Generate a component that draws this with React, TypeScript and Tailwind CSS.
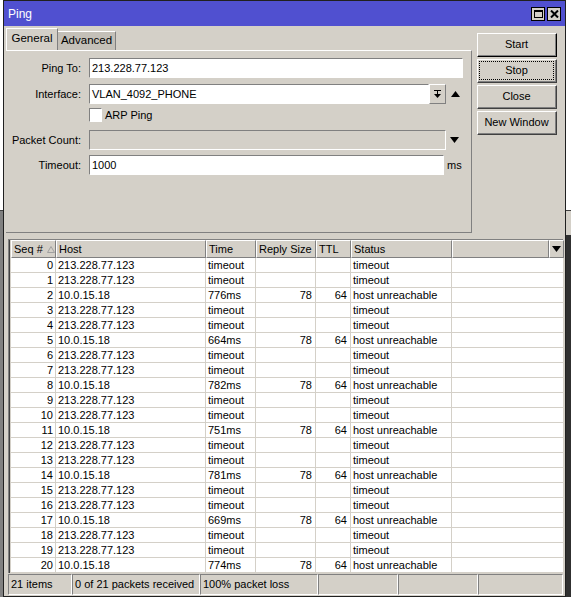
import React from "react";

const rows = [
  { seq: 0, host: "213.228.77.123", time: "timeout", size: "", ttl: "", status: "timeout" },
  { seq: 1, host: "213.228.77.123", time: "timeout", size: "", ttl: "", status: "timeout" },
  { seq: 2, host: "10.0.15.18", time: "776ms", size: "78", ttl: "64", status: "host unreachable" },
  { seq: 3, host: "213.228.77.123", time: "timeout", size: "", ttl: "", status: "timeout" },
  { seq: 4, host: "213.228.77.123", time: "timeout", size: "", ttl: "", status: "timeout" },
  { seq: 5, host: "10.0.15.18", time: "664ms", size: "78", ttl: "64", status: "host unreachable" },
  { seq: 6, host: "213.228.77.123", time: "timeout", size: "", ttl: "", status: "timeout" },
  { seq: 7, host: "213.228.77.123", time: "timeout", size: "", ttl: "", status: "timeout" },
  { seq: 8, host: "10.0.15.18", time: "782ms", size: "78", ttl: "64", status: "host unreachable" },
  { seq: 9, host: "213.228.77.123", time: "timeout", size: "", ttl: "", status: "timeout" },
  { seq: 10, host: "213.228.77.123", time: "timeout", size: "", ttl: "", status: "timeout" },
  { seq: 11, host: "10.0.15.18", time: "751ms", size: "78", ttl: "64", status: "host unreachable" },
  { seq: 12, host: "213.228.77.123", time: "timeout", size: "", ttl: "", status: "timeout" },
  { seq: 13, host: "213.228.77.123", time: "timeout", size: "", ttl: "", status: "timeout" },
  { seq: 14, host: "10.0.15.18", time: "781ms", size: "78", ttl: "64", status: "host unreachable" },
  { seq: 15, host: "213.228.77.123", time: "timeout", size: "", ttl: "", status: "timeout" },
  { seq: 16, host: "213.228.77.123", time: "timeout", size: "", ttl: "", status: "timeout" },
  { seq: 17, host: "10.0.15.18", time: "669ms", size: "78", ttl: "64", status: "host unreachable" },
  { seq: 18, host: "213.228.77.123", time: "timeout", size: "", ttl: "", status: "timeout" },
  { seq: 19, host: "213.228.77.123", time: "timeout", size: "", ttl: "", status: "timeout" },
  { seq: 20, host: "10.0.15.18", time: "774ms", size: "78", ttl: "64", status: "host unreachable" },
];

const cols = "grid grid-cols-[45px_150px_50px_60px_35px_101px_97px_15px]";

function Btn({ label, focus, def }: { label: string; focus?: boolean; def?: boolean }) {
  return (
    <div className={`h-[24px] w-[80px] ${def ? "border border-black" : "border border-[#404040]"} border-t-white border-l-white bg-[#d4d0c8]`}>
      <div className="flex h-full w-full border-r border-b border-[#808080] p-[1px]">
        <div className={`flex flex-1 items-center justify-center ${focus ? "border border-dotted border-black" : ""}`}>
          {label}
        </div>
      </div>
    </div>
  );
}

function Field({ className = "", children }: { className?: string; children?: React.ReactNode }) {
  return (
    <div className={`flex h-[20px] items-center border border-[#808080] border-r-white border-b-white pl-[2px] ${className}`}>
      {children}
    </div>
  );
}

export default function App() {
  return (
    <div className="flex h-[597px] w-[571px] overflow-hidden bg-white font-['Liberation_Sans',Arial,sans-serif] text-[11px] leading-none text-black">
      {/* outside strip left */}
      <div className="flex w-[3px] flex-col">
        <div className="h-[210px] bg-white" />
        <div className="flex-1 border-t border-[#404040] bg-[#808080]" />
      </div>

      {/* window */}
      <div className="flex w-[563px] flex-col border border-[#202020] bg-[#d4d0c8]">
        {/* title bar */}
        <div className="flex h-[25px] shrink-0 items-center bg-[#5050d0] pl-[4px] pr-[4px]">
          <span className="text-[12px] text-white">Ping</span>
          <div className="ml-auto flex gap-[2px]">
            <div className="flex h-[14px] w-[14px] items-center justify-center border border-black bg-[#d4d0c8]">
              <div className="h-[8px] w-[9px] border border-black border-t-2" />
            </div>
            <div className="flex h-[14px] w-[14px] items-center justify-center border border-black bg-[#d4d0c8]">
              <svg width="9" height="8" viewBox="0 0 9 8">
                <path d="M1 0.5 L8 7.5 M8 0.5 L1 7.5" stroke="black" strokeWidth="2" />
              </svg>
            </div>
          </div>
        </div>

        {/* top section */}
        <div className="flex shrink-0 pl-[2px] pt-[3px]">
          <div className="flex w-[466px] flex-col">
            {/* tabs */}
            <div className="flex h-[21px] items-end">
              <div className="relative z-10 flex h-[22px] w-[52px] items-center justify-center border-t border-l border-white border-r border-r-[#808080] bg-[#d4d0c8] pb-[2px] text-[11.5px]">
                General
              </div>
              <div className="flex h-[19px] w-[58px] items-center justify-center border-t border-r border-white border-r-[#808080] bg-[#c4c0b8] text-[11.5px]">
                Advanced
              </div>
            </div>
            {/* panel */}
            <div className="h-[183px] border-t border-white border-r border-r-[#808080] border-b border-b-[#808080] pt-[7px]">
              <div className="flex items-center">
                <div className="w-[76px] pr-[1px] text-right">Ping To:</div>
                <Field className="ml-[7px] w-[374px] bg-white">213.228.77.123</Field>
              </div>
              <div className="mt-[6px] flex items-center">
                <div className="w-[76px] pr-[1px] text-right">Interface:</div>
                <Field className="ml-[7px] w-[340px] bg-white">VLAN_4092_PHONE</Field>
                <div className="flex h-[20px] w-[17px] items-center justify-center border border-white border-r-[#808080] border-b-[#808080]">
                  <svg width="9" height="9" viewBox="0 0 9 9">
                    <path d="M1 0.5 H8" stroke="black" />
                    <path d="M4 1 H5 V4 H8 L4.5 8 L1 4 H4 Z" fill="black" />
                  </svg>
                </div>
                <svg className="ml-[5px]" width="9" height="6" viewBox="0 0 9 6">
                  <path d="M4.5 0 L9 6 H0 Z" fill="black" />
                </svg>
              </div>
              <div className="mt-[4px] flex items-center">
                <div className="ml-[83px] h-[14px] w-[13px] border border-[#808080] border-r-white border-b-white bg-white" />
                <span className="ml-[3px]">ARP Ping</span>
              </div>
              <div className="mt-[8px] flex items-center">
                <div className="w-[76px] pr-[1px] text-right">Packet Count:</div>
                <Field className="ml-[7px] w-[357px] bg-[#d4d0c8]" />
                <svg className="ml-[4px]" width="9" height="6" viewBox="0 0 9 6">
                  <path d="M0 0 H9 L4.5 6 Z" fill="black" />
                </svg>
              </div>
              <div className="mt-[5px] flex items-center">
                <div className="w-[76px] pr-[1px] text-right">Timeout:</div>
                <Field className="ml-[7px] w-[355px] bg-white">1000</Field>
                <span className="ml-[3px]">ms</span>
              </div>
            </div>
          </div>
          {/* buttons */}
          <div className="ml-[5px] flex flex-col gap-[2px] pt-[4px]">
            <Btn label="Start" def />
            <Btn label="Stop" focus />
            <Btn label="Close" />
            <Btn label="New Window" />
          </div>
        </div>

        {/* table */}
        <div className="ml-[4px] mt-[6px] flex w-[555px] flex-col border-t border-l border-[#808080] border-r-white">
          <div className="border-l border-[#404040] pl-[1px]">
            <div className={`${cols} h-[18px]`}>
              {["Seq #", "Host", "Time", "Reply Size", "TTL", "Status", ""].map((h, i) => (
                <div key={i} className="flex items-center border-t border-l border-white border-r border-r-[#808080] border-b border-b-[#808080] bg-[#d4d0c8] pl-[2px]">
                  {h}
                  {i === 0 && (
                    <svg className="ml-[4px]" width="8" height="7" viewBox="0 0 8 7">
                      <path d="M4 0.5 L7.5 6.5 H0.5 Z" fill="none" stroke="#a0a0a0" />
                    </svg>
                  )}
                </div>
              ))}
              <div className="flex items-center justify-center border-t border-l border-white border-r border-r-[#808080] border-b border-b-[#808080] bg-[#d4d0c8]">
                <svg width="9" height="6" viewBox="0 0 9 6">
                  <path d="M0 0 H9 L4.5 6 Z" fill="black" />
                </svg>
              </div>
            </div>
            <div className="bg-white">
              {rows.map((r) => (
                <div key={r.seq} className={`${cols} h-[15px]`}>
                  <div className="flex items-center justify-end border-r border-b border-[#d4d0c8] pr-[2px]">{r.seq}</div>
                  <div className="flex items-center border-r border-b border-[#d4d0c8] pl-[2px]">{r.host}</div>
                  <div className="flex items-center border-r border-b border-[#d4d0c8] pl-[2px]">{r.time}</div>
                  <div className="flex items-center justify-end border-r border-b border-[#d4d0c8] pr-[3px]">{r.size}</div>
                  <div className="flex items-center justify-end border-r border-b border-[#d4d0c8] pr-[3px]">{r.ttl}</div>
                  <div className="flex items-center border-r border-b border-[#d4d0c8] pl-[2px]">{r.status}</div>
                  <div className="col-span-2 border-b border-[#d4d0c8]" />
                </div>
              ))}
            </div>
          </div>
        </div>

        {/* status bar */}
        <div className="ml-[4px] mt-[1px] flex h-[21px] w-[555px]">
          {[
            { t: "21 items", w: "w-[64px]" },
            { t: "0 of 21 packets received", w: "w-[128px]" },
            { t: "100% packet loss", w: "w-[118px]" },
            { t: "", w: "w-[80px]" },
            { t: "", w: "w-[80px]" },
            { t: "", w: "w-[85px]" },
          ].map((c, i) => (
            <div key={i} className={`${c.w} flex items-center overflow-hidden whitespace-nowrap border border-[#808080] border-r-white border-b-white pl-[2px]`}>
              {c.t}
            </div>
          ))}
        </div>
      </div>

      {/* outside strip right */}
      <div className="flex w-[5px] flex-col">
        <div className="h-[210px] bg-white" />
        <div className="h-[25px] border-t border-[#404040] bg-[#d4d0c8]" />
        <div className="flex-1 bg-[#303030]" />
      </div>
    </div>
  );
}
